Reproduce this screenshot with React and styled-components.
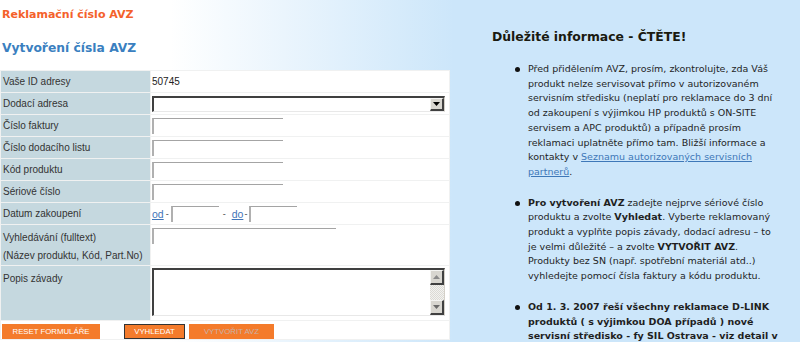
import React from "react";
import styled, { createGlobalStyle } from "styled-components";

const Global = createGlobalStyle`
  html, body { margin: 0; padding: 0; }
  body { font-family: "DejaVu Sans", Verdana, sans-serif; }
`;

const Page = styled.div`
  display: flex;
  width: 800px;
  height: 342px;
  overflow: hidden;
  background: linear-gradient(90deg, #ffffff 0, #ffffff 170px, #cce6fa 455px, #cce6fa 100%);
`;

const LeftCol = styled.div`
  width: 452px;
  flex: none;
  display: flex;
  flex-direction: column;
`;

const OrangeTitle = styled.h1`
  margin: 8px 0 0 2px;
  font: bold 11px/14px "DejaVu Sans", Verdana, sans-serif;
  color: #f4612a;
`;

const BlueTitle = styled.h2`
  margin: 18px 0 0 2px;
  font: bold 12.3px/16px "DejaVu Sans", Verdana, sans-serif;
  color: #3a7fc0;
`;

const FormTable = styled.table`
  margin-top: 14px;
  width: 450px;
  border-collapse: separate;
  border-spacing: 1px 1px;
  background: #f0f1f1;
  font: 10px "Liberation Sans", Arial, sans-serif;
  color: #333;
`;

const LabelCell = styled.td`
  width: 149px;
  box-sizing: border-box;
  height: ${(p) => p.$h || 21}px;
  padding: ${(p) => (p.$top ? "7px 0 0 2px" : "0 0 0 2px")};
  background: #c5d8df;
  vertical-align: ${(p) => (p.$top ? "top" : "middle")};
  line-height: 12px;
`;

const ValueCell = styled.td`
  background: #ffffff;
  padding: ${(p) => (p.$top ? `${p.$pt || 3}px 0 0 1px` : "0 0 0 1px")};
  vertical-align: ${(p) => (p.$top ? "top" : "middle")};
  height: ${(p) => p.$h || 21}px;
  box-sizing: border-box;
  color: #222;
`;

const ButtonCell = styled.td`
  background: #ffffff;
  height: 18px;
  box-sizing: border-box;
  padding: 3px 0 0 1px;
  vertical-align: top;
`;

const SecondLine = styled.div`
  margin-top: 6px;
`;

const TextInput = styled.input`
  display: block;
  box-sizing: border-box;
  width: ${(p) => p.$w}px;
  height: 16px;
  margin: 0;
  padding: 0 2px;
  border-style: solid;
  border-width: 1px 0 0 2px;
  border-color: #a4a4a4 transparent transparent #b0b0b0;
  background: #fff;
  font: 10px "Liberation Sans", Arial, sans-serif;
  outline: none;
`;

const DateRow = styled.div`
  display: flex;
  align-items: center;
`;

const DateLink = styled.a`
  color: #3f74b8;
  text-decoration: underline;
  font-size: 10.5px;
`;

const Dash = styled.span`
  margin: 0 ${(p) => p.$r}px 0 ${(p) => p.$l}px;
  font-size: 9px;
  color: #444;
`;

const SelectBox = styled.div`
  display: flex;
  width: 293px;
  height: 16px;
  box-sizing: border-box;
  border-style: solid;
  border-width: 2px 1px 1px 2px;
  border-color: #404040 #d4d0c8 #e8e8e8 #404040;
  background: #fff;
`;

const SelectField = styled.select`
  flex: 1;
  min-width: 0;
  border: none;
  appearance: none;
  background: transparent;
  font: 10px "Liberation Sans", Arial, sans-serif;
  outline: none;
  padding: 0;
`;

const ScrollBtn = styled.div`
  flex: none;
  width: 14px;
  height: ${(p) => p.$h}px;
  box-sizing: border-box;
  background: #d8d6d0;
  border-style: solid;
  border-width: 1px 2px 2px 1px;
  border-color: #f4f4f2 #404040 #404040 #f4f4f2;
  display: flex;
  align-items: center;
  justify-content: center;
`;

const AreaBox = styled.div`
  display: flex;
  width: 293px;
  height: 48px;
  box-sizing: border-box;
  border-style: solid;
  border-width: 2px 1px 1px 2px;
  border-color: #404040 #d4d0c8 #e8e8e8 #404040;
  background: #fff;
`;

const Area = styled.textarea`
  flex: 1;
  min-width: 0;
  border: none;
  resize: none;
  outline: none;
  padding: 0;
  font: 10px "Liberation Sans", Arial, sans-serif;
`;

const ScrollBar = styled.div`
  flex: none;
  width: 14px;
  display: flex;
  flex-direction: column;
`;

const ScrollTrack = styled.div`
  flex: 1;
  background-color: #f2f2f0;
  background-image:
    linear-gradient(45deg, #dcdad4 25%, transparent 25%, transparent 75%, #dcdad4 75%),
    linear-gradient(45deg, #dcdad4 25%, transparent 25%, transparent 75%, #dcdad4 75%);
  background-size: 2px 2px;
  background-position: 0 0, 1px 1px;
`;

const ButtonBar = styled.div`
  display: flex;
  align-items: center;
`;

const FormButton = styled.button`
  box-sizing: border-box;
  width: ${(p) => p.$w}px;
  height: 15px;
  margin: 0 0 0 ${(p) => p.$ml || 0}px;
  padding: 0;
  background: #f47b2b;
  border: ${(p) => (p.$dark ? "1px solid #333" : "1px solid #f47b2b")};
  color: ${(p) => (p.$disabled ? "#c9b2a8" : "#ffffff")};
  font: 7.8px "Liberation Sans", Arial, sans-serif;
  text-transform: uppercase;
  cursor: pointer;
`;

const RightCol = styled.div`
  flex: 1;
  padding: 28px 0 0 40px;
  background: #cce6fa;
  color: #1f1f1f;
`;

const InfoHeading = styled.h3`
  margin: 0;
  font: bold 12.4px/18px "DejaVu Sans", Verdana, sans-serif;
  color: #1a1a10;
`;

const InfoList = styled.ul`
  margin: 16px 0 0 0;
  padding: 0 0 0 36px;
  list-style: none;
  font: 9.5px/14.7px "DejaVu Sans", Verdana, sans-serif;
  white-space: nowrap;
`;

const InfoItem = styled.li`
  position: relative;
  margin-bottom: 16px;
  font-weight: ${(p) => (p.$bold ? "bold" : "normal")};
  &::before {
    content: "";
    position: absolute;
    left: -13px;
    top: 5px;
    width: 5px;
    height: 5px;
    border-radius: 50%;
    background: #111;
  }
`;

const InfoLink = styled.a`
  color: #3e78b8;
  text-decoration: underline;
`;

const Arrow = ({ dir, color }) => (
  <svg width="7" height="4" viewBox="0 0 7 4">
    {dir === "up" ? (
      <path d="M0 4 L3.5 0 L7 4 Z" fill={color} />
    ) : (
      <path d="M0 0 L7 0 L3.5 4 Z" fill={color} />
    )}
  </svg>
);

export default function App() {
  return (
    <>
      <Global />
      <Page>
        <LeftCol>
          <OrangeTitle>Reklamační číslo AVZ</OrangeTitle>
          <BlueTitle>Vytvoření čísla AVZ</BlueTitle>
          <FormTable>
            <tbody>
              <tr>
                <LabelCell>Vaše ID adresy</LabelCell>
                <ValueCell>50745</ValueCell>
              </tr>
              <tr>
                <LabelCell>Dodací adresa</LabelCell>
                <ValueCell>
                  <SelectBox>
                    <SelectField defaultValue="">
                      <option value=""></option>
                    </SelectField>
                    <ScrollBtn $h={13}>
                      <Arrow dir="down" color="#000" />
                    </ScrollBtn>
                  </SelectBox>
                </ValueCell>
              </tr>
              <tr>
                <LabelCell>Číslo faktury</LabelCell>
                <ValueCell><TextInput $w={131} /></ValueCell>
              </tr>
              <tr>
                <LabelCell>Číslo dodacího listu</LabelCell>
                <ValueCell><TextInput $w={131} /></ValueCell>
              </tr>
              <tr>
                <LabelCell>Kód produktu</LabelCell>
                <ValueCell><TextInput $w={131} /></ValueCell>
              </tr>
              <tr>
                <LabelCell>Sériové číslo</LabelCell>
                <ValueCell><TextInput $w={131} /></ValueCell>
              </tr>
              <tr>
                <LabelCell>Datum zakoupení</LabelCell>
                <ValueCell>
                  <DateRow>
                    <DateLink href="#">od</DateLink>
                    <Dash $l={2} $r={2}>-</Dash>
                    <TextInput $w={48} />
                    <Dash $l={4} $r={6}>-</Dash>
                    <DateLink href="#">do</DateLink>
                    <Dash $l={1} $r={2}>-</Dash>
                    <TextInput $w={48} />
                  </DateRow>
                </ValueCell>
              </tr>
              <tr>
                <LabelCell $h={40} $top>
                  <div>Vyhledávání (fulltext)</div>
                  <SecondLine>(Název produktu, Kód, Part.No)</SecondLine>
                </LabelCell>
                <ValueCell $h={40} $top $pt={3}>
                  <TextInput $w={184} />
                </ValueCell>
              </tr>
              <tr>
                <LabelCell $h={54} $top>Popis závady</LabelCell>
                <ValueCell $h={54} $top $pt={2}>
                  <AreaBox>
                    <Area />
                    <ScrollBar>
                      <ScrollBtn $h={15}><Arrow dir="up" color="#8a8a8a" /></ScrollBtn>
                      <ScrollTrack />
                      <ScrollBtn $h={15}><Arrow dir="down" color="#6a6a6a" /></ScrollBtn>
                    </ScrollBar>
                  </AreaBox>
                </ValueCell>
              </tr>
              <tr>
                <ButtonCell colSpan={2}>
                  <ButtonBar>
                    <FormButton $w={98}>Reset formuláře</FormButton>
                    <FormButton $w={61} $ml={24} $dark>Vyhledat</FormButton>
                    <FormButton $w={85} $ml={4} $disabled>Vytvořit AVZ</FormButton>
                  </ButtonBar>
                </ButtonCell>
              </tr>
            </tbody>
          </FormTable>
        </LeftCol>
        <RightCol>
          <InfoHeading>Důležité informace - ČTĚTE!</InfoHeading>
          <InfoList>
            <InfoItem>
              Před přidělením AVZ, prosím, zkontrolujte, zda Váš<br />
              produkt nelze servisovat přímo v autorizovaném<br />
              servisním středisku (neplatí pro reklamace do 3 dní<br />
              od zakoupení s výjimkou HP produktů s ON-SITE<br />
              servisem a APC produktů) a případně prosím<br />
              reklamaci uplatněte přímo tam. Bližší informace a<br />
              kontakty v <InfoLink href="#">Seznamu autorizovaných servisních<br />partnerů</InfoLink>.
            </InfoItem>
            <InfoItem>
              <b>Pro vytvoření AVZ</b> zadejte nejprve sériové číslo<br />
              produktu a zvolte <b>Vyhledat</b>. Vyberte reklamovaný<br />
              produkt a vyplňte popis závady, dodací adresu – to<br />
              je velmi důležité – a zvolte <b>VYTVOŘIT AVZ</b>.<br />
              Produkty bez SN (např. spotřební materiál atd..)<br />
              vyhledejte pomocí čísla faktury a kódu produktu.
            </InfoItem>
            <InfoItem $bold>
              Od 1. 3. 2007 řeší všechny reklamace D-LINK<br />
              produktů ( s výjimkou DOA případů ) nové<br />
              servisní středisko - fy SIL Ostrava - viz detail v
            </InfoItem>
          </InfoList>
        </RightCol>
      </Page>
    </>
  );
}
